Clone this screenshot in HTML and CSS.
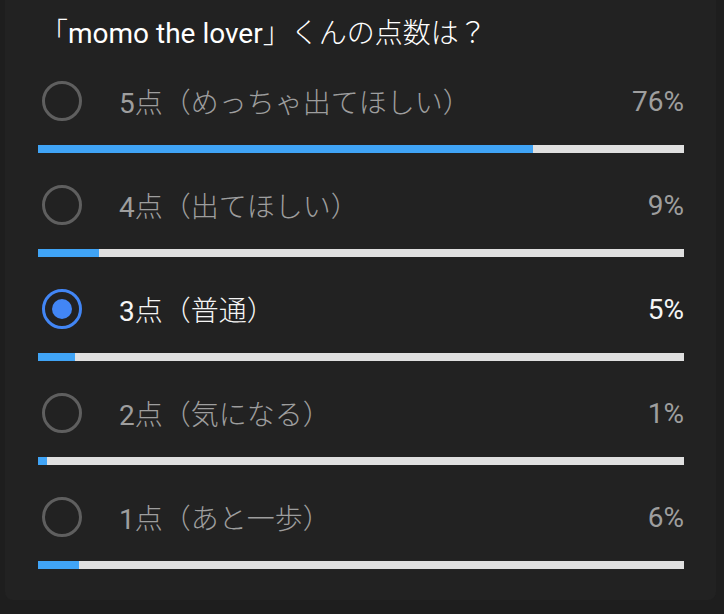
FILE: index.html
```html
<!DOCTYPE html>
<html lang="ja">
<head>
<meta charset="utf-8">
<link rel="stylesheet" href="styles.css">
</head>
<body>
<div class="card">
  <div class="title"><span class="jp">「</span>momo the lover<span class="jp">」くんの点数は？</span></div>
  <div class="opt">
    <div class="line"><span class="radio"></span><span class="label">5<span class="jp">点（めっちゃ出てほしい）</span></span><span class="pct">76%</span></div>
    <div class="bar"><div class="fill" style="width:76.6%"></div></div>
  </div>
  <div class="opt">
    <div class="line"><span class="radio"></span><span class="label">4<span class="jp">点（出てほしい）</span></span><span class="pct">9%</span></div>
    <div class="bar"><div class="fill" style="width:9.4%"></div></div>
  </div>
  <div class="opt sel">
    <div class="line"><span class="radio"></span><span class="label">3<span class="jp">点（普通）</span></span><span class="pct">5%</span></div>
    <div class="bar"><div class="fill" style="width:5.7%"></div></div>
  </div>
  <div class="opt">
    <div class="line"><span class="radio"></span><span class="label">2<span class="jp">点（気になる）</span></span><span class="pct">1%</span></div>
    <div class="bar"><div class="fill" style="width:1.4%"></div></div>
  </div>
  <div class="opt">
    <div class="line"><span class="radio"></span><span class="label">1<span class="jp">点（あと一歩）</span></span><span class="pct">6%</span></div>
    <div class="bar"><div class="fill" style="width:6.4%"></div></div>
  </div>
</div>
</body>
</html>
```
FILE: styles.css
```css
html, body {
  margin: 0;
  background: #1e1e1e;
}
body {
  font-family: "Roboto", "Noto Sans CJK JP", sans-serif;
}
.card {
  margin: 0 8px 0 5px;
  height: 600px;
  box-sizing: border-box;
  background: #222222;
  border-radius: 0 0 8px 8px;
  padding: 0 32px 0 33px;
}
.jp {
  font-family: "Noto Sans CJK JP", sans-serif;
  font-weight: 300;
}
.title {
  padding-top: 13px;
  height: 36px;
  line-height: 36px;
  font-size: 28px;
  color: #ffffff;
  padding-left: 2px;
  white-space: nowrap;
}
.opt {
  padding-top: 32px;
}
.line {
  display: flex;
  align-items: center;
  height: 40px;
  padding-left: 4px;
}
.radio {
  width: 40px;
  height: 40px;
  box-sizing: border-box;
  border: 3.5px solid #5f5f5f;
  border-radius: 50%;
  flex: none;
  display: flex;
  align-items: center;
  justify-content: center;
}
.label {
  margin-left: 37px;
  font-size: 28px;
  color: #9e9e9e;
  flex: 1;
  white-space: nowrap;
}
.pct {
  font-size: 28px;
  color: #9e9e9e;
}
.bar {
  margin-top: 24px;
  height: 8px;
  background: #e0e0e0;
}
.fill {
  height: 100%;
  background: #40a4f6;
}
.sel .radio {
  border-color: #4286f5;
}
.sel .radio::after {
  content: "";
  width: 20px;
  height: 20px;
  border-radius: 50%;
  background: #4286f5;
}
.sel .label, .sel .pct {
  color: #f5f5f5;
}
```
